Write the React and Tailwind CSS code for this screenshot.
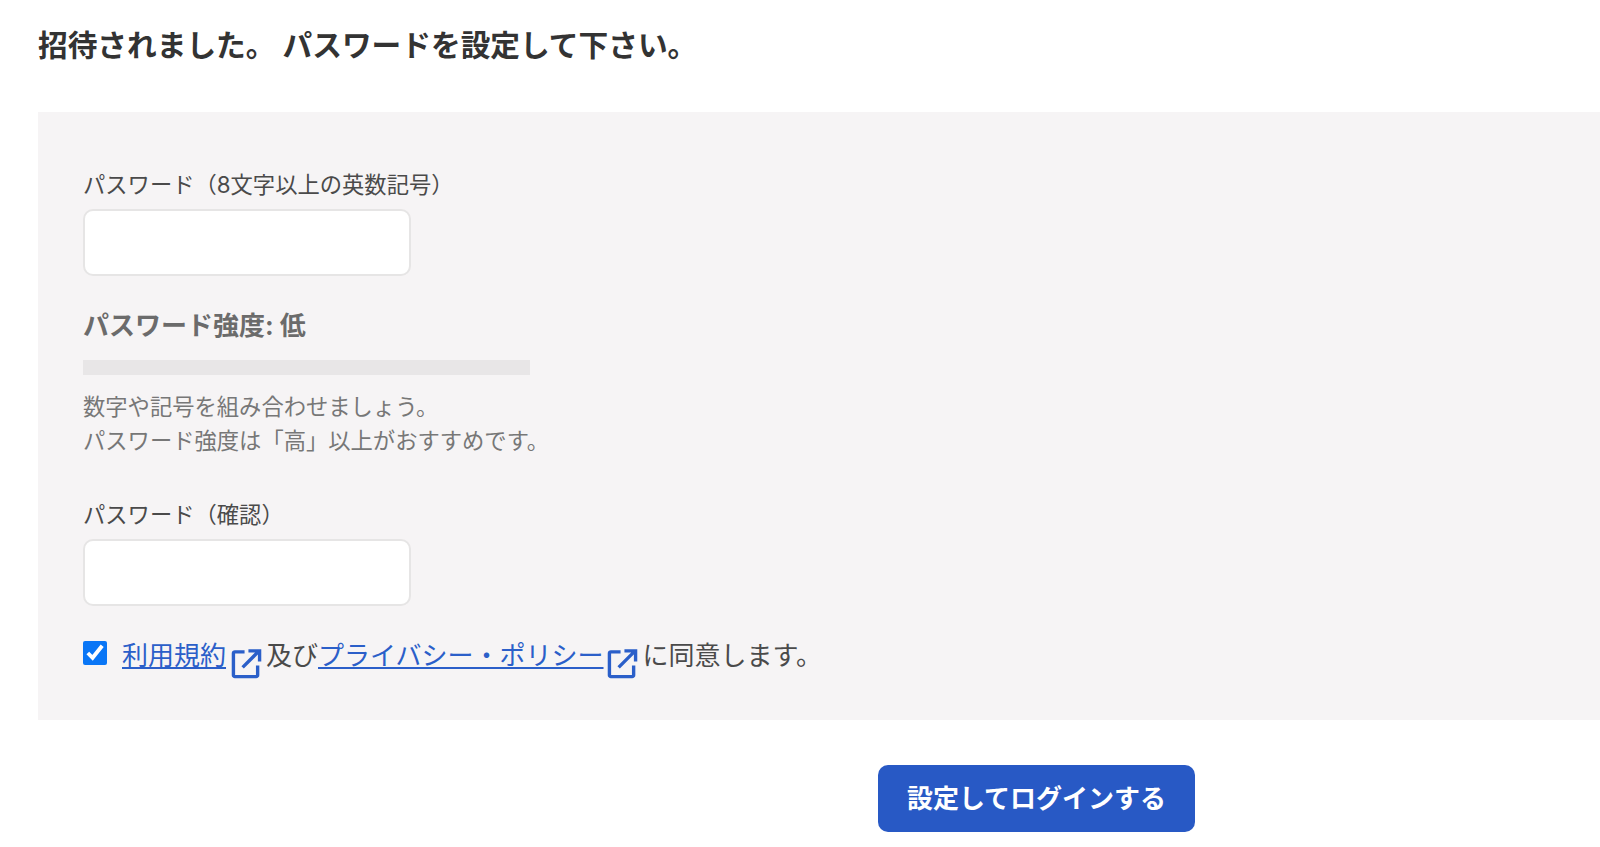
const FONT = "font-['Inter','Noto_Sans_CJK_JP',sans-serif]";

function ExternalIcon() {
  return (
    <svg width="31" height="31" viewBox="0 0 32 32" fill="none" stroke="#2b5fc9" strokeWidth="3.5" className="shrink-0 mt-[7px]">
      <path d="M14 4H4a1.500 1.500 0 0 0-1.500 1.500V28A1.500 1.500 0 0 0 4 29.500h22a1.500 1.500 0 0 0 1.500-1.500V18" />
      <path d="M12 20L29 3M18 3h11.500v11" />
    </svg>
  );
}

function PasswordField({ label }) {
  return (
    <div>
      <label className="block text-[22.3px] leading-[30px] text-[#4a4a4a]">{label}</label>
      <input type="password" className="block mt-[9px] w-[328px] h-[67px] bg-white border-2 border-[#e6e5e5] rounded-[10px]" />
    </div>
  );
}

export default function App() {
  return (
    <div className={`${FONT} bg-white h-[847px] overflow-hidden pl-[38px]`}>
      <h1 className="h-[112px] pt-[25px] text-[29.7px] leading-[40px] font-bold text-[#333333]">
        招待されました。 パスワードを設定して下さい。
      </h1>

      <div className="bg-[#f6f4f5] h-[608px] pl-[45px] pt-[58px]">
        <PasswordField label="パスワード（8文字以上の英数記号）" />

        <p className="mt-[32px] text-[26px] leading-[36px] font-bold text-[#6b6b6b]">パスワード強度: 低</p>
        <div className="mt-[16px] w-[447px] h-[15px] bg-[#e8e6e7]"></div>
        <p className="mt-[15px] text-[22.3px] leading-[34px] text-[#777777]">
          数字や記号を組み合わせましょう。<br />
          パスワード強度は「高」以上がおすすめです。
        </p>

        <div className="mt-[42px]">
          <PasswordField label="パスワード（確認）" />
        </div>

        <div className="flex items-start mt-[35px]">
          <input type="checkbox" defaultChecked readOnly className="w-[24px] h-[24px] m-0 accent-[#0a76f6] shrink-0" />
          <div className="flex items-start ml-[15px] text-[26px] leading-[30px] text-[#4a4a4a]">
            <a href="#" className="text-[#2b5fc9] underline">利用規約</a>
            <span className="ml-[5px]"><ExternalIcon /></span>
            <span className="ml-[4px]">及び</span>
            <a href="#" className="text-[#2b5fc9] underline">プライバシー・ポリシー</a>
            <span className="ml-[3px]"><ExternalIcon /></span>
            <span className="ml-[5px]">に同意します。</span>
          </div>
        </div>
      </div>

      <button className="block mt-[45px] ml-[840px] w-[317px] h-[67px] rounded-[10px] bg-[#2859c5] text-white text-[26px] font-bold">
        設定してログインする
      </button>
    </div>
  );
}
